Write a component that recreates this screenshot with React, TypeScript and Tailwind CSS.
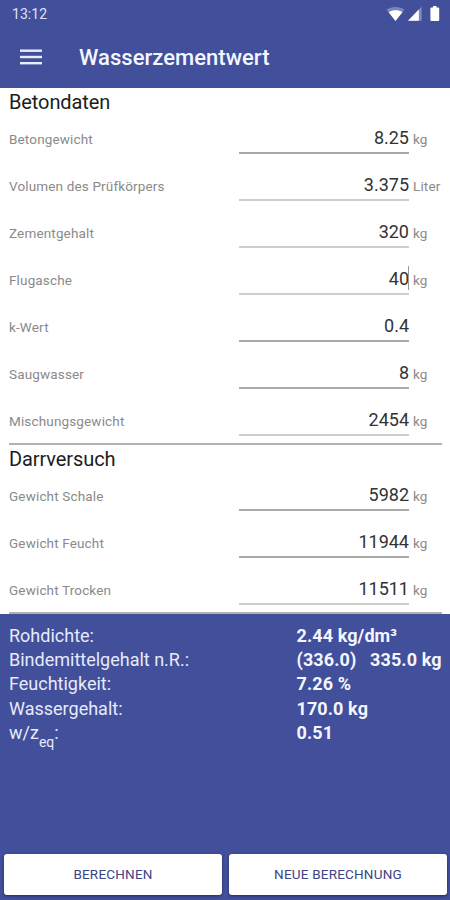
type Field = {
  label: string;
  value: string;
  unit?: string;
  focused?: boolean;
  // softer, thicker underline
  wide?: boolean;
};

const betondaten: Field[] = [
  { label: "Betongewicht", value: "8.25", unit: "kg" },
  { label: "Volumen des Prüfkörpers", value: "3.375", unit: "Liter", wide: true },
  { label: "Zementgehalt", value: "320", unit: "kg", wide: true },
  { label: "Flugasche", value: "40", unit: "kg", focused: true, wide: true },
  { label: "k-Wert", value: "0.4" },
  { label: "Saugwasser", value: "8", unit: "kg" },
  { label: "Mischungsgewicht", value: "2454", unit: "kg", wide: true },
];

const darrversuch: Field[] = [
  { label: "Gewicht Schale", value: "5982", unit: "kg" },
  { label: "Gewicht Feucht", value: "11944", unit: "kg" },
  { label: "Gewicht Trocken", value: "11511", unit: "kg", wide: true },
];

function StatusBar() {
  return (
    <div className="flex h-7 items-center justify-between pr-[8px] pl-3">
      <span className="text-[14px] leading-7 tracking-[0.05px] text-[#dfe3f7]">13:12</span>
      <svg width="56" height="16" viewBox="0 0 56 16" fill="#fff">
        <path d="M0.5 3.6C5.5 0.2 13.5 0.2 18.5 3.6L9.5 15Z" fillOpacity="0.3" />
        <path d="M2.6 6.2C6.4 3.6 12.6 3.6 16.4 6.2L9.5 15Z" />
        <path d="M35.6 0.8V14.8H22Z" fillOpacity="0.35" />
        <path d="M32.8 3.6V14.8H22Z" />
        <path d="M47.1 0H50.5V1.6H52.2Q53.2 1.6 53.2 2.6V14Q53.2 15 52.2 15H45.4Q44.4 15 44.4 14V2.6Q44.4 1.6 45.4 1.6H47.1Z" />
      </svg>
    </div>
  );
}

function FieldRow({ field }: { field: Field }) {
  return (
    <div className="flex h-[47px] items-start">
      <div className="w-[230px] pt-[13px] text-[13.5px] leading-5 tracking-[0.15px] text-[#8a8a8a]">
        {field.label}
      </div>
      <div
        className={`flex w-[170px] justify-end border-b-2 pt-[10px] ${
          field.wide ? "h-[38px] border-[#cdcdcd]" : "h-[37.5px] border-[#a9a9a9]"
        }`}
      >
        <span className="text-[18px] leading-6 text-[#333]">{field.value}</span>
        {field.focused && <span className="-mt-px -ml-px h-6 w-px bg-[#999]" />}
      </div>
      <div className="pt-[13px] pl-1 text-[13.5px] leading-5 tracking-[0.15px] text-[#8a8a8a]">
        {field.unit}
      </div>
    </div>
  );
}

function Section({ title, fields }: { title: string; fields: Field[] }) {
  return (
    <section className="px-[9px]">
      <h2 className="h-7 text-[20px] leading-7 tracking-[-0.1px] text-[#1c1c1c]">{title}</h2>
      <div className="-mb-[2px]">
        {fields.map((field) => (
          <FieldRow key={field.label} field={field} />
        ))}
      </div>
      <div className="mr-[-1px] h-[2px] bg-[#b2b2b2]" />
    </section>
  );
}

function ResultRow({ label, value }: { label: React.ReactNode; value: string }) {
  return (
    <div className="flex h-[24.2px] items-center">
      <div className="w-[287.5px] text-[18px] leading-6 text-[#e6eafa]">{label}</div>
      <div className="text-[18px] leading-6 font-bold tracking-[0.1px] whitespace-pre text-[#f4f6ff]">
        {value}
      </div>
    </div>
  );
}

function ActionButton({ label }: { label: string }) {
  return (
    <button className="h-[41px] flex-1 rounded-[3px] bg-white text-[13.5px] tracking-[0.2px] text-[#3c4586] shadow-[0_1px_3px_rgba(0,0,0,0.45)]">
      {label}
    </button>
  );
}

export default function App() {
  return (
    <div className="flex h-[900px] w-[450px] flex-col overflow-hidden bg-white font-['Roboto',sans-serif]">
      <header className="h-[88px] shrink-0 bg-[#424f9b]">
        <StatusBar />
        <div className="flex h-[60px] items-center pl-5">
          <svg width="22" height="16" viewBox="0 0 22 16" fill="#e9ecfb" className="mt-[-2px]">
            <rect y="0.5" width="22" height="2.4" />
            <rect y="6.8" width="22" height="2.4" />
            <rect y="13" width="22" height="2.4" />
          </svg>
          <h1 className="pl-[37px] text-[22px] leading-7 font-medium tracking-[0.03px] text-[#f4f6ff]">
            Wasserzementwert
          </h1>
        </div>
      </header>

      <Section title="Betondaten" fields={betondaten} />
      <Section title="Darrversuch" fields={darrversuch} />

      <footer className="flex flex-1 flex-col justify-between bg-[#424f9b] pt-[10px] pb-[5px]">
        <div className="pl-[9px]">
          <ResultRow label="Rohdichte:" value="2.44 kg/dm³" />
          <ResultRow label="Bindemittelgehalt n.R.:" value="(336.0)   335.0 kg" />
          <ResultRow label="Feuchtigkeit:" value="7.26 %" />
          <ResultRow label="Wassergehalt:" value="170.0 kg" />
          <ResultRow
            label={
              <>
                w/z<sub className="bottom-[-8px] text-[14px]">eq</sub>:
              </>
            }
            value="0.51"
          />
        </div>
        <div className="flex gap-[7px] pr-[3px] pl-1">
          <ActionButton label="BERECHNEN" />
          <ActionButton label="NEUE BERECHNUNG" />
        </div>
      </footer>
    </div>
  );
}
